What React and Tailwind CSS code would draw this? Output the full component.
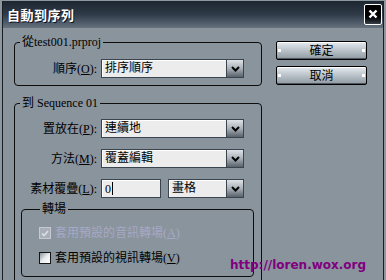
import React from "react";

const font = { fontFamily: '"Liberation Serif", "Noto Sans CJK TC", serif' };

// dropdown arrow button at the right of a select
function ArrowButton() {
  return (
    <div className="w-[17px] h-full flex items-center justify-center border-l border-[#3a444e] bg-linear-to-b from-[#dfe3e7] via-[#a9b0b7] to-[#59616a]">
      <svg width="9" height="6" viewBox="0 0 9 6">
        <polyline points="1,1 4.5,4.5 8,1" fill="none" stroke="#000" strokeWidth="2" />
      </svg>
    </div>
  );
}

function Select({ value, width = "w-[143px]" }) {
  return (
    <div className={`${width} h-[19px] flex border border-[#3a444e] bg-[#ececec] shadow-[inset_1px_1px_0_#fff]`}>
      <div className="flex-1 pl-[3px] text-[12px] leading-[17px] text-black">{value}</div>
      <ArrowButton />
    </div>
  );
}

function Label({ text, mn }) {
  return (
    <div className="text-right text-[12px] leading-[16px] text-black whitespace-nowrap">
      {text}(<span className="underline">{mn}</span>):
    </div>
  );
}

function MetalButton({ children }) {
  return (
    <div className="relative h-[19px] w-[91px] rounded-[2px] border border-black bg-linear-to-b from-[#e6ebef] via-[#b9c2c9] to-[#8f99a1] shadow-[inset_0_1px_0_#fff,inset_0_-1px_0_#4e5760] flex items-center justify-center text-[12px] leading-[16px] text-black">
      <span className="absolute left-[1px] top-[7px] w-[3px] h-[3px] bg-white" />
      <span className="absolute right-[1px] top-[7px] w-[3px] h-[3px] bg-white" />
      {children}
    </div>
  );
}

function Check({ checked, disabled }) {
  return (
    <div
      className={
        disabled
          ? "w-[12px] h-[12px] border border-[#c6c9d3] bg-[#a9afb6] flex items-center justify-center"
          : "w-[12px] h-[12px] border border-[#151515] bg-linear-to-br from-[#8d959c] via-[#e9ecee] to-white"
      }
    >
      {checked && (
        <svg width="8" height="7" viewBox="0 0 8 7">
          <polyline points="1,3.5 3,5.5 7,1" fill="none" stroke="#dcdee6" strokeWidth="1.6" />
        </svg>
      )}
    </div>
  );
}

export default function App() {
  return (
    <div className="relative w-[386px] h-[280px] overflow-hidden bg-[#8d97a0] px-[2px] pt-[1px]" style={font}>
      <div className="h-[279px] border-x border-[#1b1f24] flex flex-col bg-[#8a949d]">
        {/* title bar */}
        <div className="h-[27px] shrink-0 flex items-center justify-between pl-[4px] pr-[1px] bg-linear-to-b from-[#1c2631] via-[#2f3b48] to-[#66727e]">
          <span
            className="text-white font-bold text-[13px] leading-[16px] tracking-[0.5px]"
            style={{ fontFamily: '"Noto Sans CJK TC", sans-serif', textShadow: "1px 1px 0 #0b1220" }}
          >
            自動到序列
          </span>
          <div className="w-[18px] h-[21px] mt-[-1px] rounded-[2px] border border-white bg-linear-to-b from-black via-black to-[#39414a] flex items-center justify-center">
            <svg width="10" height="10" viewBox="0 0 10 10">
              <path d="M1.5 1.5 L8.5 8.5 M8.5 1.5 L1.5 8.5" stroke="#fff" strokeWidth="2.4" />
            </svg>
          </div>
        </div>

        {/* body */}
        <div className="flex gap-[14px] pl-[11px] pt-[6px]">
          <div className="w-[248px] flex flex-col gap-[9px]">
            <fieldset className="border border-[#0d0d0d] rounded-[4px] pb-[7px]">
              <legend className="ml-[5px] px-[2px] text-[12px] leading-[16px] text-black">從test001.prproj</legend>
              <div className="mt-[9px] grid grid-cols-[82px_143px] gap-x-[4px] items-center">
                <Label text="順序" mn="O" />
                <Select value="排序順序" />
              </div>
            </fieldset>

            <fieldset className="border border-[#0d0d0d] rounded-[4px] pb-[12px]">
              <legend className="ml-[5px] px-[2px] text-[12px] leading-[16px] text-black">到 Sequence 01</legend>
              <div className="mt-[8px] grid grid-cols-[82px_143px] gap-x-[4px] gap-y-[11px] items-center">
                <Label text="置放在" mn="P" />
                <Select value="連續地" />
                <Label text="方法" mn="M" />
                <Select value="覆蓋編輯" />
                <Label text="素材覆疊" mn="L" />
                <div className="flex gap-[7px]">
                  <div className="w-[60px] h-[19px] border border-[#3a444e] bg-[#ececec] shadow-[inset_1px_1px_0_#fff] flex items-center pl-[3px] text-[12px] text-black">
                    0<span className="w-[1px] h-[13px] bg-black ml-[1px]" />
                  </div>
                  <Select value="畫格" width="w-[76px]" />
                </div>
              </div>

              <fieldset className="mt-[3px] ml-[6px] mr-[7px] border border-[#0d0d0d] rounded-[4px] pl-[17px] pb-[10px]">
                <legend className="ml-[1px] px-[2px] text-[12px] leading-[16px] text-black">轉場</legend>
                <div className="mt-[8px] flex flex-col gap-[9px]">
                  <div className="h-[16px] flex items-center gap-[4px]">
                    <Check checked disabled />
                    <span className="text-[12px] leading-[16px] text-[#a7a9c6]">
                      套用預設的音訊轉場(<span className="underline">A</span>)
                    </span>
                  </div>
                  <div className="h-[16px] flex items-center gap-[4px]">
                    <Check />
                    <span className="text-[12px] leading-[16px] text-black">
                      套用預設的視訊轉場(<span className="underline">V</span>)
                    </span>
                  </div>
                </div>
              </fieldset>
            </fieldset>
          </div>

          <div className="flex flex-col gap-[6px] pt-[7px]">
            <MetalButton>確定</MetalButton>
            <MetalButton>取消</MetalButton>
          </div>
        </div>
      </div>

      {/* watermark */}
      <div
        className="absolute left-[230px] top-[257px] text-[12px] leading-[16px] font-bold text-[#800080]"
        style={{ fontFamily: '"DejaVu Sans", sans-serif' }}
      >
        http://loren.wox.org
      </div>
    </div>
  );
}
